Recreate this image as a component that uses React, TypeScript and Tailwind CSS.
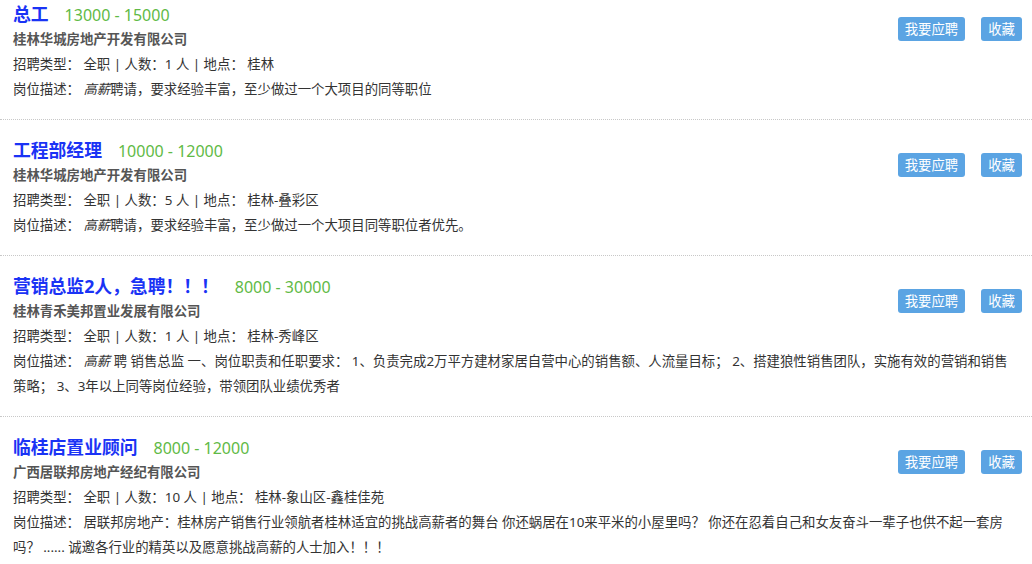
const jobs = [
  {
    title: "总工",
    salary: "13000 - 15000",
    company: "桂林华城房地产开发有限公司",
    count: "1",
    place: "桂林",
    italic: "高薪",
    desc: "聘请，要求经验丰富，至少做过一个大项目的同等职位",
  },
  {
    title: "工程部经理",
    salary: "10000 - 12000",
    company: "桂林华城房地产开发有限公司",
    count: "5",
    place: "桂林-叠彩区",
    italic: "高薪",
    desc: "聘请，要求经验丰富，至少做过一个大项目同等职位者优先。",
  },
  {
    title: "营销总监2人，急聘！！！",
    salary: "8000 - 30000",
    company: "桂林青禾美邦置业发展有限公司",
    count: "1",
    place: "桂林-秀峰区",
    italic: "高薪",
    desc: " 聘 销售总监 一、岗位职责和任职要求： 1、负责完成2万平方建材家居自营中心的销售额、人流量目标； 2、搭建狼性销售团队，实施有效的营销和销售策略； 3、3年以上同等岗位经验，带领团队业绩优秀者",
  },
  {
    title: "临桂店置业顾问",
    salary: "8000 - 12000",
    company: "广西居联邦房地产经纪有限公司",
    count: "10",
    place: "桂林-象山区-鑫桂佳苑",
    italic: "",
    desc: "居联邦房地产：桂林房产销售行业领航者桂林适宜的挑战高薪者的舞台 你还蜗居在10来平米的小屋里吗？ 你还在忍着自己和女友奋斗一辈子也供不起一套房吗？ ...... 诚邀各行业的精英以及愿意挑战高薪的人士加入！！！",
  },
];

const App = () => {
  return (
    <div className="w-[1032px] h-[564px] overflow-hidden bg-white font-['Noto_Sans','Noto_Sans_CJK_SC',sans-serif]">
      <div className="-mt-4">
        {jobs.map((job) => (
          <div
            key={job.title}
            className="pl-[13px] pr-[10px] pt-[17px] pb-[17px] border-b border-dotted border-[#c8c8c8]"
          >
            <div className="float-right mt-4 flex gap-4">
              <button className="h-6 px-[7px] rounded-[3px] bg-[#5ba4e3] text-white text-[13.4px] leading-6">
                我要应聘
              </button>
              <button className="h-6 px-[7px] rounded-[3px] bg-[#5ba4e3] text-white text-[13.4px] leading-6">
                收藏
              </button>
            </div>
            <div className="h-[26px] leading-[26px] whitespace-nowrap">
              <span className="text-[17.8px] font-bold text-[#1a33f5]">
                {job.title}
              </span>
              <span className="ml-4 text-[16px] text-[#5fba46]">
                {job.salary}
              </span>
            </div>
            <p className="text-[13.4px] leading-[25px] font-bold text-[#555]">
              {job.company}
            </p>
            <p className="text-[13.4px] leading-[25px] text-[#333]">
              招聘类型： 全职 | 人数：{job.count} 人 | 地点： {job.place}
            </p>
            <p className="mr-[3px] text-[13.4px] leading-[25px] text-[#333]">
              岗位描述：{" "}
              {job.italic && <em>{job.italic}</em>}
              {job.desc}
            </p>
          </div>
        ))}
      </div>
    </div>
  );
};

export default App;
